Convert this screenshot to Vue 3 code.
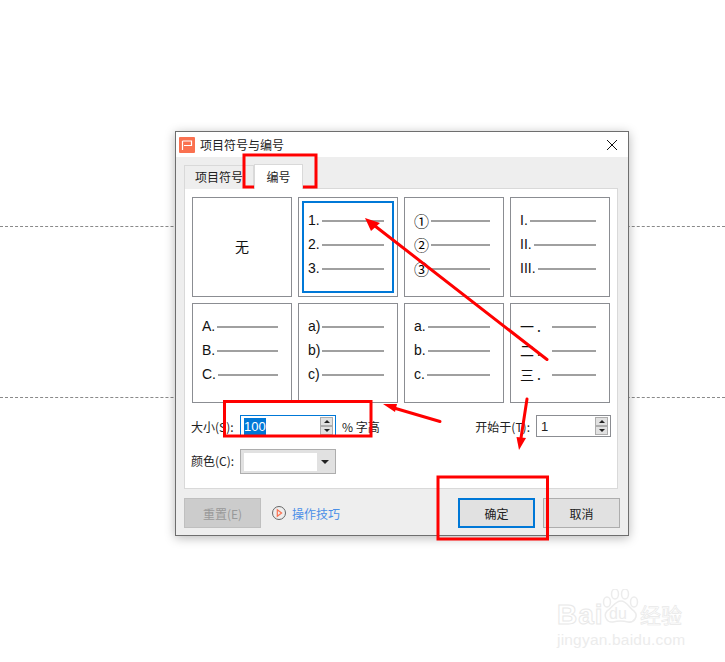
<template>
  <div class="stage">
    <div class="dots dots-top"></div>
    <div class="dots dots-bottom"></div>

    <div class="dialog">
      <div class="titlebar">
        <svg class="logo" width="16" height="16" viewBox="0 0 16 16">
          <rect width="16" height="16" rx="1" fill="#fa7150" />
          <path d="M3.5 4H12.500V8.500H5M3.500 4V13" fill="none" stroke="#fff" stroke-width="1.2" />
        </svg>
        <span class="title">项目符号与编号</span>
        <svg class="close" width="12" height="12" viewBox="0 0 12 12">
          <path d="M1 1L11 11M11 1L1 11" stroke="#111" stroke-width="1" fill="none" />
        </svg>
      </div>

      <div class="tabs">
        <div class="tab">项目符号</div>
        <div class="tab active">编号</div>
      </div>

      <div class="panel">
        <div class="grid">
          <div v-for="cell in cells" :key="cell.id" class="cell" :class="{ selected: cell.selected, none: !cell.rows }">
            <span v-if="!cell.rows" class="none-text">无</span>
            <template v-else>
              <div v-for="row in cell.rows" :key="row" class="row">
                <span class="num" :class="{ wide: cell.wide, ring: cell.ring }">{{ row }}</span>
                <span class="rule"></span>
              </div>
            </template>
          </div>
        </div>

        <div class="field-row">
          <label class="field-label">大小(S):</label>
          <div class="input focused">
            <span class="sel">100</span>
            <div class="spin">
              <button><i class="up"></i></button>
              <button><i class="down"></i></button>
            </div>
          </div>
          <span class="unit">% 字高</span>
          <label class="start-label">开始于(T):</label>
          <div class="input start">
            <span class="val">1</span>
            <div class="spin">
              <button><i class="up"></i></button>
              <button><i class="down"></i></button>
            </div>
          </div>
        </div>

        <div class="field-row color-row">
          <label class="field-label">颜色(C):</label>
          <div class="combo">
            <div class="swatch"></div>
            <i class="down big"></i>
          </div>
        </div>
      </div>

      <div class="footer">
        <button class="btn reset">重置(E)</button>
        <svg class="play" width="16" height="16" viewBox="0 0 16 16">
          <circle cx="8" cy="8" r="6.5" fill="none" stroke="#666" stroke-width="1" />
          <path d="M6.3 4.8L10.6 8L6.3 11.2Z" fill="none" stroke="#fa7150" stroke-width="1.2" />
        </svg>
        <span class="tips">操作技巧</span>
        <button class="btn ok">确定</button>
        <button class="btn cancel">取消</button>
      </div>
    </div>

    <svg class="marks" width="725" height="662" viewBox="0 0 725 662">
      <g fill="none" stroke="#f00" stroke-width="3">
        <rect x="244" y="155" width="72" height="32" />
        <rect x="224.500" y="401.500" width="146.500" height="34.500" />
        <rect x="438" y="477" width="109.500" height="62" />
      </g>
      <g stroke="#f00" stroke-width="3" stroke-linecap="round">
        <line x1="547" y1="359.500" x2="375" y2="226" />
        <line x1="440" y1="421.500" x2="394" y2="408" />
        <line x1="527" y1="399" x2="521" y2="438" />
      </g>
      <g fill="#f00">
        <polygon points="365,218 380,223 371,231" />
        <polygon points="383,404 397,404 395,412" />
        <polygon points="519,450 516.500,437 526,438" />
      </g>
    </svg>

    <div class="watermark">
      <div class="wm-top">
        <span class="wm-bai">Bai</span>
        <svg class="wm-paw" width="40" height="36" viewBox="0 0 40 36">
          <g fill="#fff" stroke="#ececec" stroke-width="1.500">
            <ellipse cx="6" cy="13" rx="3.500" ry="5" />
            <ellipse cx="14" cy="5" rx="3.500" ry="5" />
            <ellipse cx="24" cy="5" rx="3.500" ry="5" />
            <ellipse cx="33" cy="13" rx="3.500" ry="5" />
            <path d="M20 12C26 12 28 19 33 22C38 27 33 34 27 33C23 32 16 32 12 33C6 34 2 27 6 22C11 19 14 12 20 12Z" />
          </g>
        </svg>
        <span class="wm-du">du</span>
        <span class="wm-cn">经验</span>
      </div>
      <div class="wm-url">jingyan.baidu.com</div>
    </div>
  </div>
</template>

<script setup>
const cells = [
  { id: 'none' },
  { id: 'num', selected: true, rows: ['1.', '2.', '3.'] },
  { id: 'circle', ring: true, rows: ['①', '②', '③'] },
  { id: 'roman', rows: ['I.', 'II.', 'III.'] },
  { id: 'upper', rows: ['A.', 'B.', 'C.'] },
  { id: 'paren', rows: ['a)', 'b)', 'c)'] },
  { id: 'lower', rows: ['a.', 'b.', 'c.'] },
  { id: 'cn', wide: true, rows: ['一.', '二.', '三.'] },
]
</script>

<style>
body {
  margin: 0;
  background: #fff;
}
</style>

<style scoped>
.stage {
  position: relative;
  width: 725px;
  height: 662px;
  padding: 131px 0 0 175px;
  box-sizing: border-box;
  overflow: hidden;
  font-family: "Noto Sans CJK SC", "Liberation Sans", sans-serif;
  font-size: 12px;
  color: #222;
}

.dots {
  position: absolute;
  left: 0;
  right: 0;
  border-top: 1px dashed #8a8a8a;
}
.dots-top {
  top: 226px;
}
.dots-bottom {
  top: 397px;
}

.dialog {
  position: relative;
  width: 454px;
  height: 405px;
  box-sizing: border-box;
  border: 1px solid #6e6e6e;
  background: #eee;
  box-shadow: 0 2px 10px rgba(0, 0, 0, 0.28);
}

.titlebar {
  display: flex;
  align-items: center;
  height: 25px;
  padding: 0 10px 0 3px;
  background: #fff;
}
.title {
  margin-left: 5px;
  margin-top: -1px;
  flex: 1;
}

.tabs {
  display: flex;
  height: 24px;
  padding: 8px 0 0 8px;
  margin-bottom: -1px;
}
.tab {
  position: relative;
  width: 70px;
  box-sizing: border-box;
  border: 1px solid #d9d9d9;
  border-bottom: none;
  background: #eee;
  text-align: center;
  line-height: 22px;
}
.tab.active {
  width: 49px;
  background: #fff;
  z-index: 1;
  margin-top: -1px;
  height: 25px;
  line-height: 24px;
}

.panel {
  width: 434px;
  height: 301px;
  box-sizing: border-box;
  margin-left: 8px;
  border: 1px solid #d9d9d9;
  background: #fff;
  padding: 8px 7px 0;
}

.grid {
  display: grid;
  grid-template-columns: repeat(4, 100px);
  grid-auto-rows: 100px;
  gap: 6px;
}

.cell {
  position: relative;
  box-sizing: border-box;
  border: 1px solid #8b8d92;
  padding: 11px 13px 0 9px;
  font-family: "Liberation Sans", "Noto Sans CJK SC", sans-serif;
  font-size: 14px;
  color: #111;
}
.cell.none {
  display: flex;
  align-items: center;
  justify-content: center;
  padding: 0 0 2px;
}
.none-text {
  font-family: "Noto Sans CJK SC", sans-serif;
}
.cell.selected {
  outline: 2px solid #0078d7;
  outline-offset: -6px;
}

.row {
  display: flex;
  align-items: center;
  height: 24px;
}
.num {
  white-space: nowrap;
  margin-right: 2px;
  padding-bottom: 2px;
}
.num.wide {
  width: 30px;
  margin-right: 2px;
  letter-spacing: 3px;
  font-family: "Noto Sans CJK SC", sans-serif;
}
.num.ring {
  font-family: "Noto Sans CJK SC", sans-serif;
  font-size: 15px;
  color: #000;
}
.rule {
  flex: 1;
  height: 2px;
  background: #a0a0a0;
}

.field-row {
  display: flex;
  align-items: center;
  height: 22px;
  margin-top: 12px;
}
.color-row {
  height: 25px;
}
.field-label {
  width: 49px;
  margin-left: -1px;
  white-space: nowrap;
}
.color-row .field-label {
  padding-bottom: 2px;
}
.input {
  display: flex;
  align-items: center;
  justify-content: space-between;
  width: 96px;
  height: 22px;
  box-sizing: border-box;
  border: 1px solid #8b8d92;
  padding: 0 2px 0 3px;
  font-family: "Liberation Sans", sans-serif;
}
.input.focused {
  border-color: #0078d7;
}
.input.start {
  width: 75px;
  margin-right: -1px;
}
.sel {
  height: 17px;
  line-height: 17px;
  background: #0078d7;
  color: #fff;
  font-size: 13px;
}
.val {
  font-size: 13px;
  margin-left: 1px;
}
.spin {
  display: flex;
  flex-direction: column;
  width: 13px;
}
.spin button {
  display: flex;
  align-items: center;
  justify-content: center;
  height: 9px;
  padding: 0;
  box-sizing: border-box;
  border: 1px solid #adadad;
  background: #e1e1e1;
}
.up {
  width: 0;
  height: 0;
  border: 3px solid transparent;
  border-top: 0;
  border-bottom: 3px solid #222;
}
.down {
  width: 0;
  height: 0;
  border: 3px solid transparent;
  border-bottom: 0;
  border-top: 3px solid #222;
}
.unit {
  margin-left: 6px;
  white-space: nowrap;
}
.start-label {
  margin-left: auto;
  margin-right: 6px;
  white-space: nowrap;
}

.combo {
  display: flex;
  align-items: center;
  width: 96px;
  height: 25px;
  box-sizing: border-box;
  border: 1px solid #adadad;
  background: #e1e1e1;
  padding: 0 6px 0 3px;
}
.swatch {
  width: 73px;
  height: 18px;
  background: #fff;
}
.down.big {
  margin-left: auto;
  border-width: 4px 4px 0;
  border-top-color: #222;
}

.footer {
  display: flex;
  align-items: center;
  height: 30px;
  margin-top: 9px;
  padding: 0 8px;
}
.btn {
  width: 77px;
  height: 30px;
  box-sizing: border-box;
  border: 1px solid #adadad;
  background: #e1e1e1;
  padding: 0;
  font-family: "Noto Sans CJK SC", sans-serif;
  font-size: 12px;
  color: #222;
}
.reset {
  background: #ccc;
  border-color: #bfbfbf;
  color: #999;
}
.play {
  margin-left: 10px;
}
.tips {
  margin-left: 5px;
  color: #4a8fe7;
}
.ok {
  margin-left: auto;
  border: 2px solid #0078d7;
}
.cancel {
  margin-left: 8px;
}

.marks {
  position: absolute;
  left: 0;
  top: 0;
  pointer-events: none;
}

.watermark {
  position: absolute;
  left: 557px;
  top: 590px;
  color: #ececec;
  font-family: "Liberation Sans", sans-serif;
}
.wm-top {
  position: relative;
  height: 38px;
}
.wm-bai {
  position: absolute;
  left: 0;
  top: 9px;
  font-size: 28px;
  line-height: 32px;
  font-weight: 700;
  letter-spacing: 1px;
  color: #fff;
  -webkit-text-stroke: 1px #e8e8e8;
}
.wm-paw {
  position: absolute;
  left: 44px;
  top: -1px;
}
.wm-du {
  position: absolute;
  left: 52px;
  top: 14px;
  font-size: 16px;
  line-height: 20px;
}
.wm-cn {
  position: absolute;
  left: 83px;
  top: 10px;
  font-family: "Noto Sans CJK SC", sans-serif;
  font-size: 21px;
  line-height: 28px;
  color: #fff;
  -webkit-text-stroke: 0.7px #e8e8e8;
}
.wm-url {
  margin-top: 4px;
  font-size: 15.5px;
  line-height: 16px;
  letter-spacing: 0.2px;
  white-space: nowrap;
}
</style>
